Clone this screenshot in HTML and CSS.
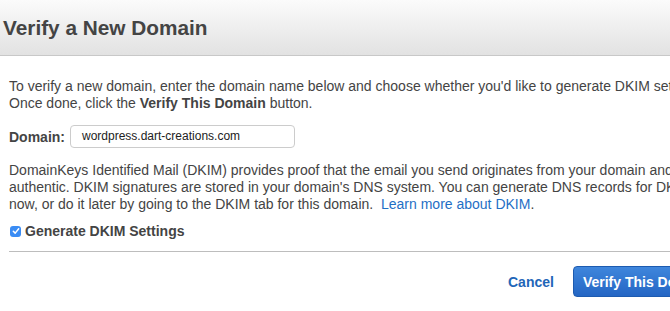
FILE: index.html
```html
<!DOCTYPE html>
<html>
<head>
<meta charset="utf-8">
<link rel="stylesheet" href="styles.css">
</head>
<body>
<div class="dialog">
  <div class="header">
    <h1 class="title">Verify a New Domain</h1>
  </div>
  <div class="content">
    <p class="intro">To verify a new domain, enter the domain name below and choose whether you'd like to generate DKIM settings.<br>Once done, click the <b>Verify This Domain</b> button.</p>
    <div class="domain-row">
      <label class="domain-label">Domain:</label>
      <div class="domain-input">wordpress.dart-creations.com</div>
    </div>
    <p class="dkim">DomainKeys Identified Mail (DKIM) provides proof that the email you send originates from your domain and is<br>authentic. DKIM signatures are stored in your domain's DNS system. You can generate DNS records for DKIM settings<br>now, or do it later by going to the DKIM tab for this domain.&nbsp; <a class="link" href="#">Learn more about DKIM</a>.</p>
    <div class="check-row">
      <span class="checkbox"><svg width="10" height="10" viewBox="0 0 10 10"><path d="M2.3 5.2 L4.2 7.1 L7.7 2.8" fill="none" stroke="#fff" stroke-width="1.5" stroke-linecap="round" stroke-linejoin="round"/></svg></span>
      <span class="check-label">Generate DKIM Settings</span>
    </div>
  </div>
  <div class="footer">
    <a class="cancel" href="#">Cancel</a>
    <button class="primary">Verify This Domain</button>
  </div>
</div>
</body>
</html>
```
FILE: styles.css
```css
html, body {
  margin: 0;
  padding: 0;
  background: #fff;
}
body {
  width: 670px;
  height: 311px;
  overflow: hidden;
  font-family: "Liberation Sans", Arial, Helvetica, sans-serif;
  color: #444;
}
.dialog {
  width: 800px;
}
.header {
  height: 55px;
  display: flex;
  align-items: center;
  padding-left: 3px;
  background: linear-gradient(#fbfbfb, #e2e2e2);
  border-bottom: 1px solid #c8c8c8;
}
.title {
  margin: 0;
  font-size: 20.8px;
  font-weight: bold;
  color: #444;
}
.content {
  padding: 22px 0 0 9px;
}
.intro, .dkim {
  margin: 0;
  font-size: 14px;
  line-height: 17px;
  white-space: nowrap;
}
.intro b {
  font-weight: bold;
}
.domain-row {
  display: flex;
  align-items: center;
  gap: 5px;
  margin-top: 13px;
}
.domain-label {
  font-size: 14px;
  font-weight: bold;
}
.domain-input {
  width: 212px;
  height: 21px;
  border: 1px solid #ccc;
  border-radius: 4px;
  padding-left: 11px;
  font-size: 12px;
  line-height: 21px;
  color: #222;
}
.dkim {
  margin-top: 14px;
}
.link {
  color: #1f6fc5;
  text-decoration: none;
}
.check-row {
  display: flex;
  align-items: center;
  gap: 4px;
  margin-top: 10px;
  padding-left: 1px;
}
.checkbox {
  width: 11px;
  height: 11px;
  border-radius: 3px;
  background: #3a8cf4;
  display: flex;
  align-items: center;
  justify-content: center;
}
.checkbox svg {
  display: block;
}
.check-label {
  font-size: 14px;
  font-weight: bold;
}
.footer {
  margin: 12px 0 0 9px;
  border-top: 1px solid #bdbdbd;
  padding-top: 14px;
  display: flex;
  align-items: center;
  gap: 19px;
  padding-left: 499px;
}
.cancel {
  font-size: 14px;
  font-weight: bold;
  color: #1f66b8;
  text-decoration: none;
}
.primary {
  height: 31px;
  padding: 0 9px;
  border: 1px solid #1d5bb0;
  border-radius: 4px;
  background: linear-gradient(#3f86dc, #2466c4);
  color: #fff;
  font-family: "Liberation Sans", Arial, Helvetica, sans-serif;
  font-size: 14px;
  font-weight: bold;
}
```
